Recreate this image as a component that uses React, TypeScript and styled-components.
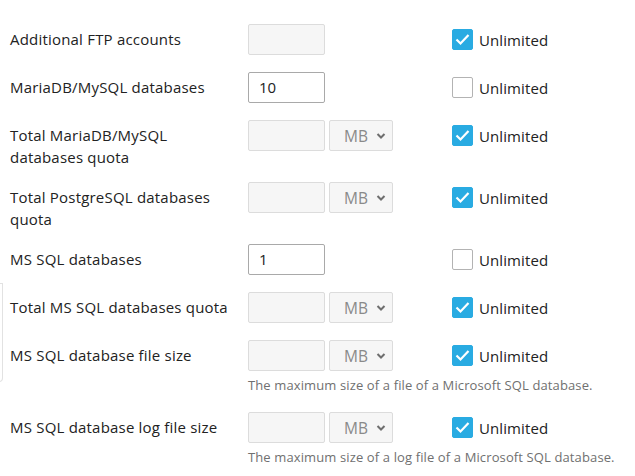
import React from "react";
import styled, { createGlobalStyle } from "styled-components";

const GlobalStyle = createGlobalStyle`
  html, body { margin: 0; padding: 0; background: #fff; }
  body { font-family: "Open Sans", "Liberation Sans", sans-serif; color: #222; }
`;

const Page = styled.div`
  position: relative;
  width: 635px;
  min-height: 476px;
  padding-top: 24px;
  box-sizing: border-box;
`;

const EdgeMark = styled.div`
  position: absolute;
  left: -2px;
  top: 283px;
  width: 4px;
  height: 97px;
  border: 1px solid #e2e2e2;
  border-left: none;
  border-radius: 0 0 4px 0;
`;

const Row = styled.div`
  display: grid;
  grid-template-columns: 238px 204px 1fr;
  padding-left: 10px;
  margin-bottom: 17px;
  align-items: start;
`;

const Label = styled.div`
  font-size: 15px;
  line-height: 22px;
  letter-spacing: 0.2px;
  width: 228px;
  margin-top: 4px;
  margin-bottom: -3px;
  color: #222;
`;

const Controls = styled.div`
  display: flex;
  gap: 4px;
  height: 31px;
`;

const TextInput = styled.div<{ $enabled?: boolean }>`
  width: 77px;
  height: 31px;
  box-sizing: border-box;
  border: 1px solid ${(p) => (p.$enabled ? "#a9a9a9" : "#dcdcdc")};
  background: ${(p) => (p.$enabled ? "#fff" : "#f6f6f6")};
  border-radius: 2px;
  font-size: 15px;
  line-height: 29px;
  padding-left: 10px;
  color: #222;
`;

const Select = styled.div`
  width: 64px;
  height: 31px;
  box-sizing: border-box;
  border: 1px solid #dcdcdc;
  background: #f6f6f6;
  border-radius: 2px;
  display: flex;
  align-items: center;
  padding-left: 14px;
  padding-right: 6px;
  font-size: 15.5px;
  color: #8a8a8a;
  justify-content: space-between;
`;

const CheckCell = styled.label`
  display: flex;
  align-items: center;
  height: 31px;
  gap: 6px;
  font-size: 15px;
  letter-spacing: 0.1px;
  color: #222;
`;

const Box = styled.span<{ $checked: boolean }>`
  width: 21px;
  height: 21px;
  box-sizing: border-box;
  border-radius: 2px;
  display: flex;
  align-items: center;
  justify-content: center;
  background: ${(p) => (p.$checked ? "#29abe2" : "#fff")};
  border: 1px solid ${(p) => (p.$checked ? "#29abe2" : "#b3b3b3")};
`;

const Hint = styled.div`
  grid-column: 2 / 4;
  font-size: 13px;
  line-height: 19px;
  letter-spacing: 0.12px;
  margin-top: 5px;
  color: #707070;
  white-space: nowrap;
`;

const Chevron = () => (
  <svg width="10" height="8" viewBox="0 0 10 8">
    <polyline points="1.5,2 5,5.5 8.5,2" fill="none" stroke="#6e6e6e" strokeWidth="2" />
  </svg>
);

const Check = () => (
  <svg width="15" height="13" viewBox="0 0 15 13">
    <polyline points="1.5,6.5 5.5,10.5 13.5,2" fill="none" stroke="#fff" strokeWidth="2.2" />
  </svg>
);

type Item = {
  label: string;
  value?: string;
  unit?: boolean;
  checked: boolean;
  hint?: string;
};

const items: Item[] = [
  { label: "Additional FTP accounts", checked: true },
  { label: "MariaDB/MySQL databases", value: "10", checked: false },
  { label: "Total MariaDB/MySQL databases quota", unit: true, checked: true },
  { label: "Total PostgreSQL databases quota", unit: true, checked: true },
  { label: "MS SQL databases", value: "1", checked: false },
  { label: "Total MS SQL databases quota", unit: true, checked: true },
  {
    label: "MS SQL database file size",
    unit: true,
    checked: true,
    hint: "The maximum size of a file of a Microsoft SQL database.",
  },
  {
    label: "MS SQL database log file size",
    unit: true,
    checked: true,
    hint: "The maximum size of a log file of a Microsoft SQL database.",
  },
];

export default function App() {
  return (
    <>
      <GlobalStyle />
      <Page>
        <EdgeMark />
        {items.map((it) => (
          <Row key={it.label}>
            <Label>{it.label}</Label>
            <Controls>
              <TextInput $enabled={it.value !== undefined}>{it.value}</TextInput>
              {it.unit && (
                <Select>
                  <span>MB</span>
                  <Chevron />
                </Select>
              )}
            </Controls>
            <CheckCell>
              <Box $checked={it.checked}>{it.checked && <Check />}</Box>
              Unlimited
            </CheckCell>
            {it.hint && <Hint>{it.hint}</Hint>}
          </Row>
        ))}
      </Page>
    </>
  );
}
